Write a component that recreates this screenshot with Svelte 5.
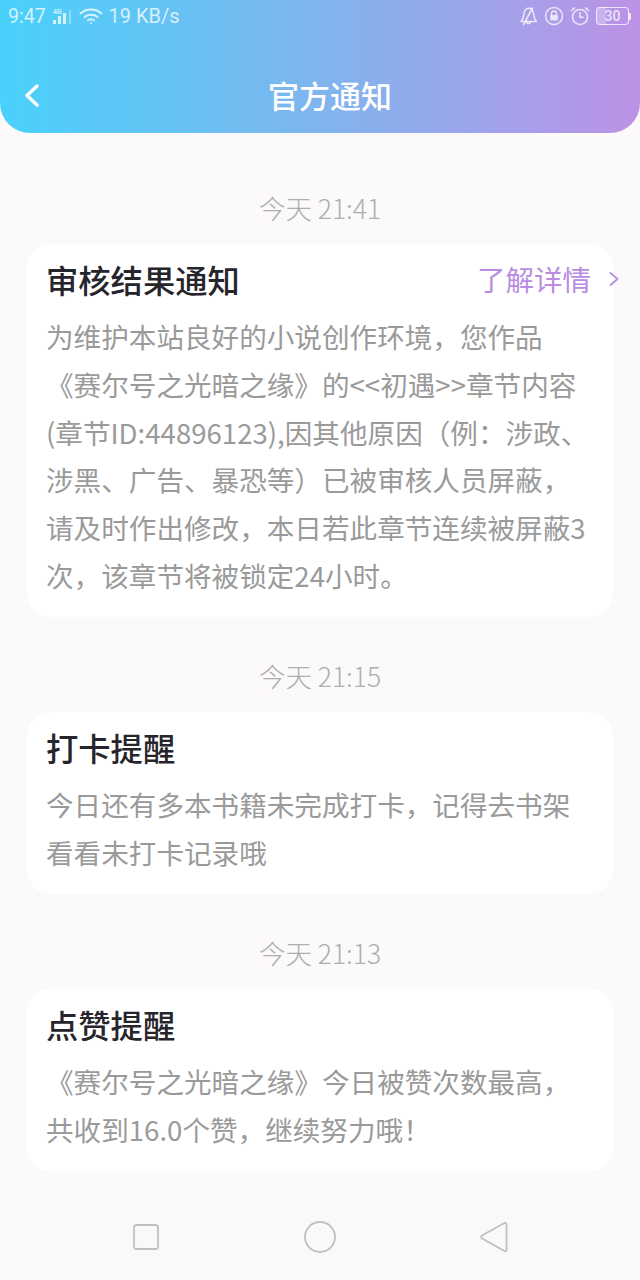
<script>
  const notices = [
    {
      time: '今天 21:41',
      title: '审核结果通知',
      link: '了解详情',
      lines: [
        '为维护本站良好的小说创作环境，您作品',
        '《赛尔号之光暗之缘》的<<初遇>>章节内容',
        '(章节ID:44896123),因其他原因（例：涉政、',
        '涉黑、广告、暴恐等）已被审核人员屏蔽，',
        '请及时作出修改，本日若此章节连续被屏蔽3',
        '次，该章节将被锁定24小时。'
      ]
    },
    {
      time: '今天 21:15',
      title: '打卡提醒',
      lines: ['今日还有多本书籍未完成打卡，记得去书架', '看看未打卡记录哦']
    },
    {
      time: '今天 21:13',
      title: '点赞提醒',
      lines: ['《赛尔号之光暗之缘》今日被赞次数最高，', '共收到16.0个赞，继续努力哦！']
    }
  ];
</script>

<div class="screen">
  <header class="header">
    <div class="status">
      <div class="status-group">
        <span class="clock">9:47</span>
        <svg class="signal" width="22" height="18" viewBox="0 0 22 18">
          <text x="1" y="6.5" class="tiny">4G</text>
          <rect x="1" y="13" width="3" height="4" />
          <rect x="6" y="9" width="3" height="8" />
          <rect x="11" y="6" width="3" height="11" />
          <rect x="17" y="3" width="2" height="14" opacity="0.45" />
        </svg>
        <svg class="wifi" width="24" height="18" viewBox="0 0 24 18" fill="none" stroke="currentColor" stroke-width="2" stroke-linecap="round">
          <path d="M1.5 6.5 C7 1 17 1 22.5 6.5" />
          <path d="M5.5 10 C9 7 15 7 18.500 10" />
          <path d="M9 13.300 C10.800 12 13.200 12 15 13.300" />
          <circle cx="12" cy="16" r="1" fill="currentColor" stroke="none" />
        </svg>
        <span class="speed">19 KB/s</span>
      </div>
      <div class="status-group right">
        <svg width="19" height="20" viewBox="0 0 18 20" fill="none" stroke="currentColor" stroke-width="1.600" stroke-linejoin="round" stroke-linecap="round">
          <path d="M1.500 15.500 C4 13 4 11 4.500 7.500 C5 4 7 2.200 9.500 2.200 C12 2.200 13.500 4 14 7.500 C14.500 11 15 13.500 17 15.500 Z" />
          <path d="M7 15.500 C7.200 17.800 10 18.500 11 16" />
          <path d="M13 2 L4 18.500" />
        </svg>
        <svg width="20" height="20" viewBox="0 0 20 20" fill="none" stroke="currentColor" stroke-width="1.500">
          <circle cx="10" cy="10" r="8.500" />
          <rect x="6.200" y="9" width="7.600" height="5.500" rx="1" fill="currentColor" stroke="none" />
          <path d="M7.500 9 V7.500 A2.500 2.500 0 0 1 12.500 7.500 V9" />
        </svg>
        <svg width="20" height="20" viewBox="0 0 20 20" fill="none" stroke="currentColor" stroke-width="1.600" stroke-linecap="round">
          <circle cx="10" cy="11" r="7.500" />
          <path d="M10 6.800 V11.300 H13.200" />
          <path d="M1.500 4.500 L4.500 1.800" />
          <path d="M18.500 4.500 L15.500 1.800" />
        </svg>
        <div class="battery"><span>30</span></div>
        <span class="nub"></span>
      </div>
    </div>
    <div class="nav">
      <svg class="back" width="18" height="26" viewBox="0 0 18 26" fill="none" stroke="currentColor" stroke-width="3.400" stroke-linecap="round" stroke-linejoin="round">
        <path d="M14 3 L4 12.500 L14 22" />
      </svg>
      <h1>官方通知</h1>
    </div>
  </header>

  <main class="list">
    {#each notices as notice}
      <section class="notice">
        <div class="time">{notice.time}</div>
        <article class="card">
          <div class="card-head">
            <h2>{notice.title}</h2>
            {#if notice.link}
              <div class="link">
                <span>{notice.link}</span>
                <svg width="12" height="18" viewBox="0 0 12 18" fill="none" stroke="currentColor" stroke-width="1.800" stroke-linecap="round" stroke-linejoin="round">
                  <path d="M2.500 3 L9.500 9 L2.500 15" />
                </svg>
              </div>
            {/if}
          </div>
          <div class="body">
            {#each notice.lines as line}
              <div class="line">{line}</div>
            {/each}
          </div>
        </article>
      </section>
    {/each}
  </main>

  <footer class="softkeys">
    <svg width="28" height="28" viewBox="0 0 28 28" fill="none" stroke="#c0c0c0" stroke-width="1.800">
      <rect x="2" y="2" width="24" height="24" rx="2.500" />
    </svg>
    <svg width="32" height="32" viewBox="0 0 32 32" fill="none" stroke="#c0c0c0" stroke-width="1.800">
      <circle cx="16" cy="16" r="15" />
    </svg>
    <svg width="28" height="32" viewBox="0 0 28 32" fill="none" stroke="#c0c0c0" stroke-width="1.800" stroke-linejoin="round">
      <path d="M25.500 2 C26 2 26.500 2.500 26.500 3 V29 C26.500 30 25.500 30.500 24.500 30 L2 17.500 C1 16.800 1 15.200 2 14.500 L24.500 2 Z" />
    </svg>
  </footer>
</div>

<style>
  :global(body) {
    margin: 0;
    background: #fbf9fa;
  }

  .screen {
    width: 640px;
    height: 1280px;
    display: flex;
    flex-direction: column;
    overflow: hidden;
    background: #fbf9fa;
    font-family: "Noto Sans CJK SC", "Noto Sans", sans-serif;
  }

  .header {
    height: 133px;
    flex: none;
    box-sizing: border-box;
    border-radius: 0 0 30px 30px;
    background: linear-gradient(90deg, #49d1fb 0%, #7fb5ee 50%, #bc92e6 100%);
    color: #fff;
  }

  .status {
    height: 32px;
    display: flex;
    justify-content: space-between;
    align-items: center;
    padding: 0 9px 0 8px;
    color: rgba(255, 255, 255, 0.75);
    font-family: Roboto, sans-serif;
    font-size: 20px;
  }

  .status-group {
    display: flex;
    align-items: center;
    gap: 6px;
  }

  .status-group.right {
    gap: 6px;
  }

  .clock {
    font-size: 19.500px;
  }

  .signal {
    fill: currentColor;
  }

  .tiny {
    font-size: 7px;
    font-weight: 700;
    font-family: Roboto, sans-serif;
  }

  .wifi {
    margin-left: -1px;
  }

  .battery {
    box-sizing: border-box;
    width: 33px;
    height: 18px;
    border: 1.500px solid currentColor;
    border-radius: 4px;
    display: flex;
    align-items: center;
    justify-content: center;
    font-size: 14px;
    font-weight: 500;
    line-height: 1;
    background: linear-gradient(90deg, rgba(255, 255, 255, 0.28) 30%, transparent 30%);
  }

  .nub {
    width: 2px;
    height: 7px;
    margin-left: -6px;
    background: currentColor;
    border-radius: 0 1px 1px 0;
  }

  .nav {
    height: 62px;
    margin-top: 32px;
    padding-left: 20px;
    display: flex;
    align-items: center;
    justify-content: center;
    position: relative;
    box-sizing: border-box;
  }

  .back {
    position: absolute;
    left: 23px;
    top: 19px;
  }

  h1 {
    margin: 0;
    font-size: 31px;
    font-weight: 500;
    line-height: 1.2;
  }

  .list {
    flex: 1;
    padding: 57px 27px 0;
  }

  .notice + .notice {
    margin-top: 41px;
  }

  .time {
    height: 36px;
    line-height: 36px;
    text-align: center;
    font-size: 26.500px;
    font-weight: 300;
    color: #aeaeae;
    margin-bottom: 18px;
  }

  .card {
    background: #fff;
    border-radius: 24px;
    padding: 13px 20px 17.500px 19px;
    box-sizing: border-box;
  }

  .card-head {
    display: flex;
    justify-content: space-between;
    align-items: center;
    height: 44px;
  }

  h2 {
    margin: 0;
    font-size: 32.300px;
    font-weight: 500;
    line-height: 44px;
    color: #26252c;
    white-space: nowrap;
  }

  .link {
    display: flex;
    align-items: center;
    gap: 17px;
    margin-right: -27px;
    font-size: 28.500px;
    line-height: 44px;
    color: #b88de2;
  }

  .body {
    margin-top: 12px;
  }

  .line {
    height: 47.800px;
    line-height: 47.800px;
    font-size: 27.600px;
    color: #9a9a9a;
    white-space: nowrap;
  }

  .softkeys {
    height: 82px;
    flex: none;
    background: #f9f9f9;
    box-sizing: border-box;
    padding: 0 132px 4px;
    display: flex;
    align-items: center;
    justify-content: space-between;
  }
</style>
